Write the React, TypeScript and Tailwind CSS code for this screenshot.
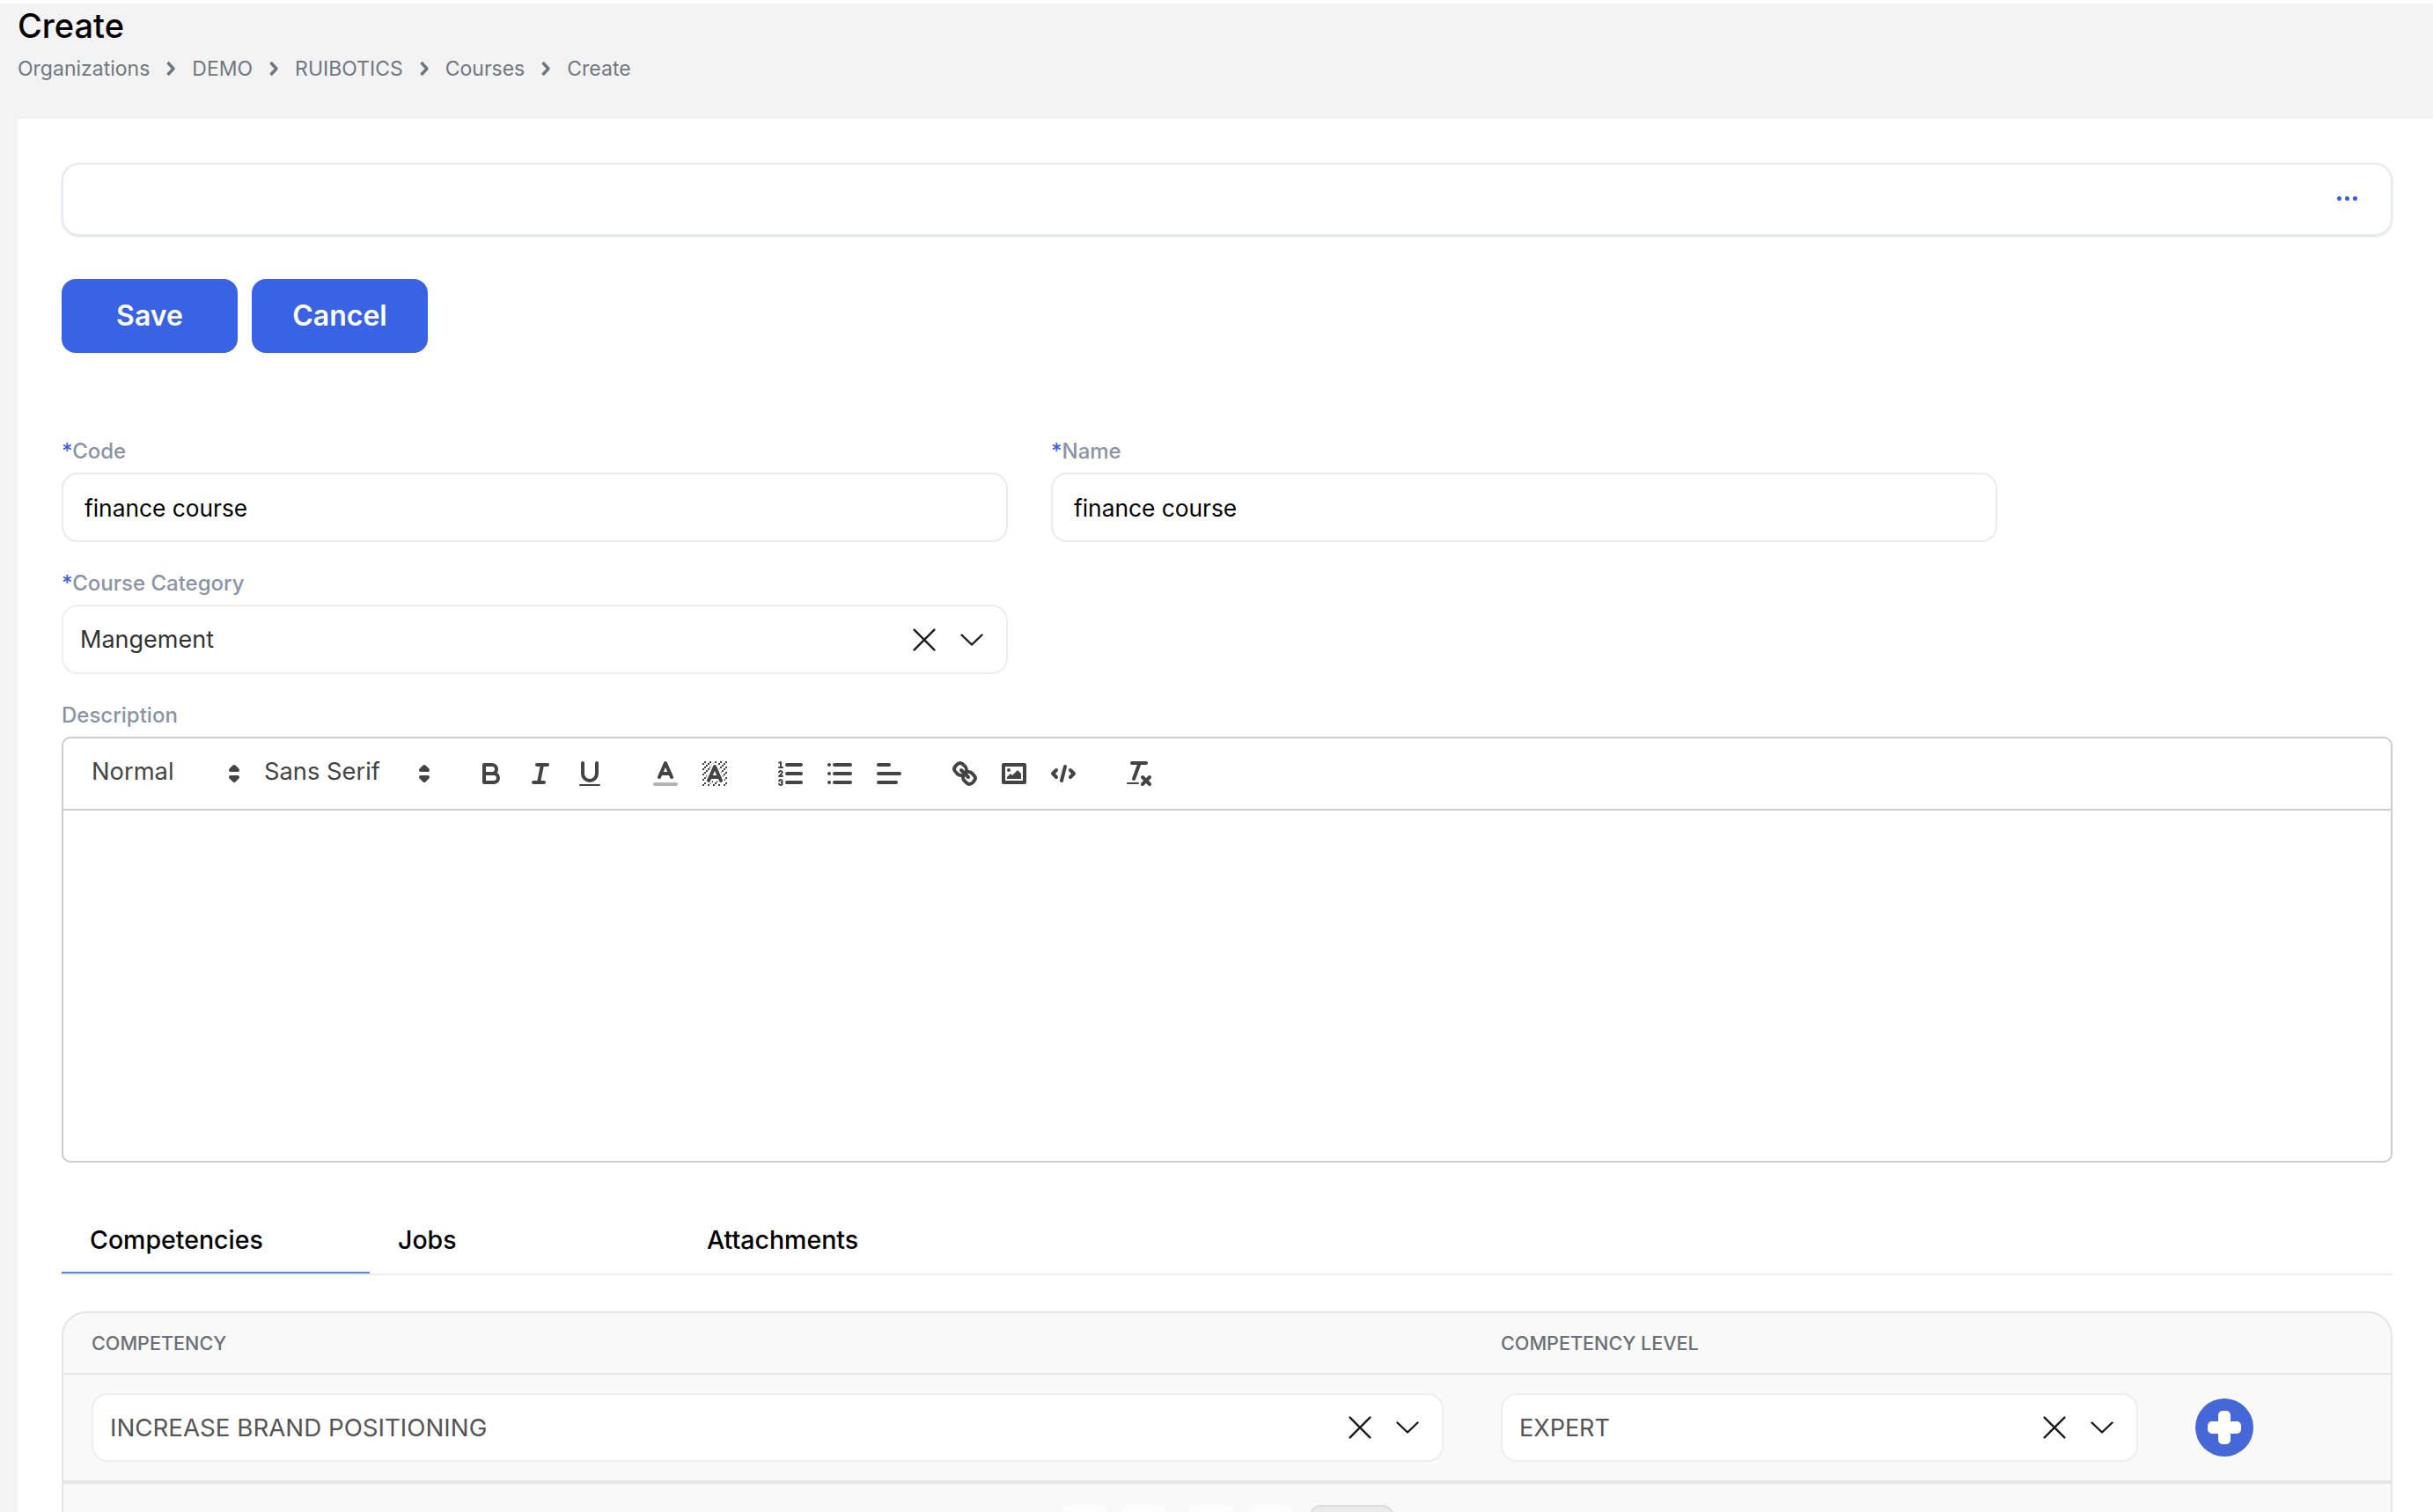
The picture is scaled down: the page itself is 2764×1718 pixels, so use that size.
import type { ReactNode } from "react";

const bgRects: [number, number][] = [
  [4, 4], [2, 6], [3, 5], [4, 7], [2, 12], [2, 9], [2, 15], [3, 8], [12, 2], [11, 3], [2, 3], [6, 2], [3, 2], [5, 3], [9, 2],
  [15, 14], [13, 7], [15, 5], [14, 6], [15, 8], [14, 9], [14, 3], [15, 2], [12, 5], [13, 4], [9, 14], [8, 15], [5, 15], [11, 15], [14, 15], [15, 11],
];

const bgPaths = [
  "M6 6.868V6H5v1h.942z",
  "M6.817 5H6v1h.38z",
  "M4 11.439V11H3v1h.755z",
  "M4.63 10H4v1h.192z",
  "M10.832,4.2L11,4.582V4H10.708A1.948,1.948,0,0,1,10.832,4.2Z",
  "M7,4.582L7.168,4.2A1.929,1.929,0,0,1,7.292,4H7V4.582Z",
  "M8,13H7.683l-0.351.8a1.933,1.933,0,0,1-.124.2H8V13Z",
  "M9,3H8V3.282A1.985,1.985,0,0,1,9,3Z",
  "M13.447 10.174l.361.826H14V10h-.63z",
  "M3.775,14H3v1H4V14.314A1.97,1.97,0,0,1,3.775,14Z",
  "M12 6.868V6h-.38z",
  "M12.933 9H13V8h-.505z",
  "M6,14.926V15H7V14.316A1.993,1.993,0,0,1,6,14.926Z",
  "M10.668,13.8L10.317,13H10v1h0.792A1.947,1.947,0,0,1,10.668,13.8Z",
  "M14.332,12.2a1.99,1.99,0,0,1,.166.8H15V12H14.245Z",
];

function QlIcon({ children }: { children: ReactNode }) {
  return (
    <svg viewBox="0 0 18 18" fill="none" stroke="#444" strokeWidth={2} strokeLinecap="round" strokeLinejoin="round" className="w-9 h-9">
      {children}
    </svg>
  );
}

function ToolButton({ children }: { children: ReactNode }) {
  return (
    <div className="w-14 flex justify-center items-center">
      <QlIcon>{children}</QlIcon>
    </div>
  );
}

function Picker({ label, width }: { label: string; width: string }) {
  return (
    <div className={`flex items-center justify-between ${width}`}>
      <span className="pl-4 text-[27.3px] font-normal text-[#444] -mt-1">{label}</span>
      <QlIcon>
        <polygon points="7 11 9 13 11 11 7 11" />
        <polygon points="7 7 9 5 11 7 7 7" />
      </QlIcon>
    </div>
  );
}

function Toolbar() {
  return (
    <div className="h-[82px] border-b-2 border-[#ccc] pl-4 flex items-center">
      <div className="flex items-center mr-[30px]">
        <Picker label="Normal" width="w-[196px]" />
        <Picker label="Sans Serif" width="w-[216px]" />
      </div>
      <div className="flex mr-[30px]">
        <ToolButton>
          <path d="M5,4H9.5A2.5,2.5,0,0,1,12,6.5v0A2.5,2.5,0,0,1,9.5,9H5A0,0,0,0,1,5,9V4A0,0,0,0,1,5,4Z" />
          <path d="M5,9h5.5A2.5,2.5,0,0,1,13,11.5v0A2.5,2.5,0,0,1,10.5,14H5a0,0,0,0,1,0,0V9A0,0,0,0,1,5,9Z" />
        </ToolButton>
        <ToolButton>
          <line x1="7" x2="13" y1="4" y2="4" />
          <line x1="5" x2="11" y1="14" y2="14" />
          <line x1="8" x2="10" y1="14" y2="4" />
        </ToolButton>
        <ToolButton>
          <path d="M5,3V9a4.012,4.012,0,0,0,4,4H9a4.012,4.012,0,0,0,4-4V3" />
          <rect height="1" rx=".5" ry=".5" width="12" x="3" y="15" fill="#444" stroke="none" />
        </ToolButton>
      </div>
      <div className="flex mr-[30px]">
        <ToolButton>
          <line x1="3" x2="15" y1="15" y2="15" opacity="0.4" />
          <polyline points="5.5 11 9 3 12.5 11" />
          <line x1="11.63" x2="6.38" y1="9" y2="9" />
        </ToolButton>
        <ToolButton>
          <g fill="#444" stroke="none">
            {bgRects.map(([x, y]) => (
              <rect key={`${x}-${y}`} width="1" height="1" x={x} y={y} />
            ))}
            {bgPaths.map((d) => (
              <path key={d} d={d} />
            ))}
          </g>
          <polyline points="5.5 13 9 5 12.5 13" />
          <line x1="11.63" x2="6.38" y1="11" y2="11" />
        </ToolButton>
      </div>
      <div className="flex mr-[30px]">
        <ToolButton>
          <line x1="7" x2="15" y1="4" y2="4" />
          <line x1="7" x2="15" y1="9" y2="9" />
          <line x1="7" x2="15" y1="14" y2="14" />
          <line x1="2.5" x2="4.5" y1="5.5" y2="5.5" strokeWidth={1} />
          <path
            d="M3.5,6A0.5,0.5,0,0,1,3,5.5V3.085l-0.276.138A0.5,0.5,0,0,1,2.053,3c-0.124-.247-0.023-0.324.224-0.447l1-.5A0.5,0.5,0,0,1,4,2.5v3A0.5,0.5,0,0,1,3.5,6Z"
            fill="#444"
            stroke="none"
          />
          <path d="M4.5,10.5h-2c0-.234,1.85-1.076,1.85-2.234A0.959,0.959,0,0,0,2.5,8.156" strokeWidth={1} />
          <path d="M2.5,14.846a0.959,0.959,0,0,0,1.85-.109A0.7,0.7,0,0,0,3.75,14a0.688,0.688,0,0,0,.6-0.736,0.959,0.959,0,0,0-1.85-.109" strokeWidth={1} />
        </ToolButton>
        <ToolButton>
          <line x1="6" x2="15" y1="4" y2="4" />
          <line x1="6" x2="15" y1="9" y2="9" />
          <line x1="6" x2="15" y1="14" y2="14" />
          <line x1="3" x2="3" y1="4" y2="4" />
          <line x1="3" x2="3" y1="9" y2="9" />
          <line x1="3" x2="3" y1="14" y2="14" />
        </ToolButton>
        <ToolButton>
          <line x1="3" x2="15" y1="9" y2="9" />
          <line x1="3" x2="13" y1="14" y2="14" />
          <line x1="3" x2="9" y1="4" y2="4" />
        </ToolButton>
      </div>
      <div className="flex mr-[30px]">
        <ToolButton>
          <line x1="7" x2="11" y1="7" y2="11" />
          <path d="M8.9,4.577a3.476,3.476,0,0,1,.36,4.679A3.476,3.476,0,0,1,4.577,8.9C3.185,7.5,2.035,6.4,4.217,4.217S7.5,3.185,8.9,4.577Z" />
          <path d="M13.423,9.1a3.476,3.476,0,0,0-4.679-.36,3.476,3.476,0,0,0,.36,4.679c1.392,1.392,2.5,2.542,4.679.36S14.815,10.5,13.423,9.1Z" />
        </ToolButton>
        <ToolButton>
          <rect height="10" width="12" x="3" y="4" />
          <circle cx="6" cy="7" r="1" fill="#444" stroke="none" />
          <polyline points="5 12 5 11 7 9 8 10 11 7 13 9 13 12 5 12" fill="#444" stroke="none" />
        </ToolButton>
        <ToolButton>
          <polyline points="5 7 3 9 5 11" />
          <polyline points="13 7 15 9 13 11" />
          <line x1="10" x2="8" y1="5" y2="13" />
        </ToolButton>
      </div>
      <ToolButton>
        <line x1="5" x2="13" y1="3" y2="3" />
        <line x1="6" x2="9.35" y1="12" y2="3" />
        <line x1="11" x2="15" y1="11" y2="15" />
        <line x1="15" x2="11" y1="11" y2="15" />
        <rect height="1" rx=".5" ry=".5" width="7" x="2" y="14" fill="#444" stroke="none" />
      </ToolButton>
    </div>
  );
}

function ClearIcon() {
  return (
    <svg viewBox="0 0 24 24" className="w-[26px] h-[26px]" fill="none" stroke="#1a1a1a" strokeWidth={2.2} strokeLinecap="round">
      <path d="M1.5 1.5 22.5 22.5M22.5 1.5 1.5 22.5" />
    </svg>
  );
}

function ChevronIcon() {
  return (
    <svg viewBox="0 0 26 14" className="w-[26px] h-[14px]" fill="none" stroke="#1a1a1a" strokeWidth={2.4} strokeLinecap="round" strokeLinejoin="round">
      <path d="M1.5 1.5 13 12.5 24.5 1.5" />
    </svg>
  );
}

function SelectBox({ value, className, textClass }: { value: string; className: string; textClass: string }) {
  return (
    <div className={`h-[78px] bg-white border-2 rounded-[18px] flex items-center justify-between pl-[19px] pr-[26px] ${className}`}>
      <span className={`pt-[2px] ${textClass}`}>{value}</span>
      <div className="flex items-center gap-[28px]">
        <ClearIcon />
        <ChevronIcon />
      </div>
    </div>
  );
}

function Label({ text, required }: { text: string; required?: boolean }) {
  return (
    <div className="h-[30px] mb-[10px] pt-[1px] text-[24px] leading-[30px] font-medium text-[#8a94a6]">
      {required && <span className="text-[#3a62e4]">*</span>}
      {text}
    </div>
  );
}

function TextField({ label, value }: { label: string; value: string }) {
  return (
    <div className="w-[1075px]">
      <Label text={label} required />
      <div className="h-[79px] border-2 border-[#e9ebf1] rounded-[18px] flex items-center pl-[24px] pt-[2px] text-[26.3px] text-black">{value}</div>
    </div>
  );
}

function Crumb() {
  return (
    <svg viewBox="0 0 12 18" className="w-3 h-[18px]" fill="none" stroke="#6f767d" strokeWidth={3.4} strokeLinejoin="round">
      <path d="M2.5 2 9 9 2.5 16" />
    </svg>
  );
}

const crumbs = ["Organizations", "DEMO", "RUIBOTICS", "Courses", "Create"];
const pageDots = ["one", "two", "three"];

export default function App() {
  return (
    <div className="w-[2764px] h-[1718px] overflow-hidden bg-white pt-1 font-['Inter',sans-serif]">
      <div className="bg-[#f3f3f3] h-full">
        <div className="h-[131px] pl-5">
          <div className="text-[38px] leading-[50px] font-medium text-black">Create</div>
          <div className="flex items-center gap-[18px] mt-[2px] text-[23px] leading-[44px] text-[#6f7880]">
            {crumbs.map((c, i) => (
              <div key={c} className="flex items-center gap-[18px]">
                {i > 0 && <Crumb />}
                <span>{c}</span>
              </div>
            ))}
          </div>
        </div>

        <div className="ml-5 h-full bg-white pl-[50px] pr-[46px] pt-[50px]">
          <div className="h-[83px] border-2 border-[#e5e9f0] rounded-[20px] shadow-sm flex items-center justify-end pr-[38px]">
            <div className="flex gap-1 -mt-[3px]">
              {pageDots.map((d) => (
                <span key={d} className="w-[5px] h-[5px] rounded-full bg-[#2f5fe8]" />
              ))}
            </div>
          </div>

          <div className="flex gap-4 mt-[49px] mb-[96px]">
            <button className="w-[200px] h-[84px] rounded-2xl bg-[#3a62e4] text-white text-[32px] font-semibold">Save</button>
            <button className="w-[200px] h-[84px] rounded-2xl bg-[#3a62e4] text-white text-[32px] font-semibold">Cancel</button>
          </div>

          <div className="flex gap-[49px]">
            <TextField label="Code" value="finance course" />
            <TextField label="Name" value="finance course" />
          </div>

          <div className="w-[1075px] mt-[31px]">
            <Label text="Course Category" required />
            <SelectBox value="Mangement" className="border-[#eeeeee] h-[79px]" textClass="text-[27px] text-[#333]" />
          </div>

          <div className="mt-[31px]">
            <Label text="Description" />
            <div className="h-[484px] border-2 border-[#ccc] rounded-[10px]">
              <Toolbar />
            </div>
          </div>

          <div className="mt-[68px] flex border-b-2 border-[#eeeeee] text-[28.5px] leading-[40px] font-medium text-black">
            <div className="w-[350px] pl-8 pb-4 border-b-2 border-[#5b84ea]">Competencies</div>
            <div className="w-[351px] pl-8 pb-4">Jobs</div>
            <div className="pl-8 pb-4">Attachments</div>
          </div>

          <div className="mt-[41px] h-[400px] bg-[#f9f9f9] border-2 border-[#e5e5e5] rounded-[28px]">
            <div className="h-[70px] border-b-2 border-[#e5e5e5] px-8 flex items-center gap-[65px] text-[21.6px] font-medium text-[#6b6f76]">
              <div className="w-[1536px]">COMPETENCY</div>
              <div>COMPETENCY LEVEL</div>
            </div>
            <div className="h-[124px] border-b-4 border-[#e5e5e5] px-8 flex items-center gap-[65px]">
              <SelectBox value="INCREASE BRAND POSITIONING" className="w-[1536px] border-[#eeeeee]" textClass="text-[27.7px] text-[#555]" />
              <div className="flex items-center gap-[65px]">
                <SelectBox value="EXPERT" className="w-[724px] border-[#eeeeee]" textClass="text-[27px] text-[#555]" />
                <svg viewBox="0 0 66 66" className="w-[66px] h-[66px]">
                  <circle cx="33" cy="33" r="33" fill="#4667d8" />
                  <rect x="26" y="14" width="14" height="38" rx="5" fill="#fff" />
                  <rect x="14" y="26" width="38" height="14" rx="5" fill="#fff" />
                </svg>
              </div>
            </div>
            <div className="flex justify-center pt-6">
              <div className="flex gap-[13px]">
                <div className="w-[54px] h-10 rounded-t-xl bg-[#fdfdfd]" />
                <div className="w-[54px] h-10 rounded-t-xl bg-[#fdfdfd]" />
                <div className="w-[54px] h-10 rounded-t-xl bg-[#fdfdfd] ml-[10px]" />
                <div className="w-[54px] h-10 rounded-t-xl bg-[#fdfdfd]" />
                <div className="w-[95px] h-10 rounded-t-xl bg-[#ebebeb] border-2 border-[#dddddd] ml-[5px]" />
              </div>
            </div>
          </div>
        </div>
      </div>
    </div>
  );
}
